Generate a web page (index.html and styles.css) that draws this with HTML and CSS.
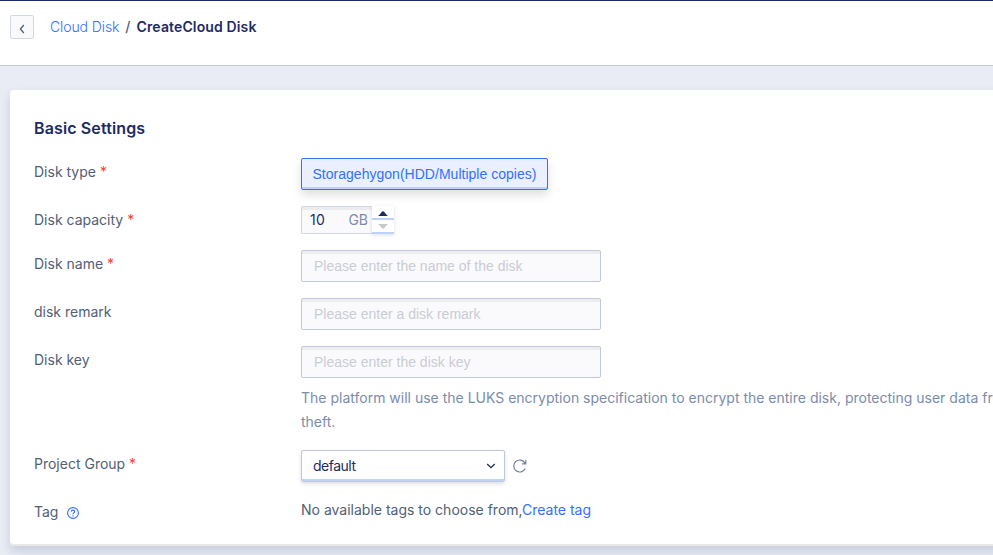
FILE: index.html
```html
<!DOCTYPE html>
<html lang="en">
<head>
<meta charset="utf-8">
<title>Create Cloud Disk</title>
<link rel="stylesheet" href="styles.css">
</head>
<body>
<header class="topbar">
  <button class="back" aria-label="Back"><svg width="6" height="10" viewBox="0 0 6 10"><path d="M4.8 1L1.4 5l3.4 4"/></svg></button>
  <nav class="crumbs"><a href="#">Cloud Disk</a><span class="sep">/</span><strong>CreateCloud Disk</strong></nav>
</header>
<main class="card">
  <h2>Basic Settings</h2>
  <form class="form">
    <div class="row">
      <label>Disk type <i>*</i></label>
      <button type="button" class="choice">Storagehygon(HDD/Multiple copies)</button>
    </div>
    <div class="row capacity">
      <label>Disk capacity <i>*</i></label>
      <div class="stepper">
        <div class="amount"><span>10</span><span class="unit">GB</span></div>
        <div class="arrows">
          <span class="up"><svg width="10" height="5" viewBox="0 0 10 5"><path d="M0 5Q1.5 4 3.5 1.2Q5-.8 6.500 1.200Q8.500 4 10 5z"/></svg></span>
          <span class="down"><svg width="10" height="5" viewBox="0 0 10 5"><path d="M0 0h10Q8.500 1 6.500 3.800Q5 5.800 3.500 3.800Q1.500 1 0 0z"/></svg></span>
        </div>
      </div>
    </div>
    <div class="row">
      <label>Disk name <i>*</i></label>
      <input class="field" placeholder="Please enter the name of the disk">
    </div>
    <div class="row">
      <label>disk remark</label>
      <input class="field" placeholder="Please enter a disk remark">
    </div>
    <div class="row">
      <label>Disk key</label>
      <div>
        <input class="field" placeholder="Please enter the disk key">
        <p class="help">The platform will use the LUKS encryption specification to encrypt the entire disk, protecting user data from<br>theft.</p>
      </div>
    </div>
    <div class="row">
      <label>Project Group <i>*</i></label>
      <div class="group">
        <div class="select"><span>default</span><svg width="10" height="6" viewBox="0 0 10 6"><path d="M1.200 1L5 4.600 8.800 1"/></svg></div>
        <svg class="refresh" width="14" height="14" viewBox="0 0 14 14"><path d="M12 4.100A6 6 0 1 0 12.200 9.500M12.800 1v3.800H9"/></svg>
      </div>
    </div>
    <div class="row">
      <label class="tag">Tag <svg width="12" height="12" viewBox="0 0 12 12"><circle cx="6" cy="6" r="5.400"/><path d="M4.300 4.800C4.300 2.500 7.700 2.600 7.700 4.600C7.700 5.800 6 5.800 6 7.300M6 8.300v1.200"/></svg></label>
      <div class="tags">No available tags to choose from,<a href="#">Create tag</a></div>
    </div>
  </form>
</main>
</body>
</html>
```
FILE: styles.css
```css
* { box-sizing: border-box; }
html { overflow: hidden; }
body {
  margin: 0;
  height: 555px;
  overflow: hidden;
  background: #e9ecf4;
  color: #526075;
  font: 400 14px/24px Inter, "Liberation Sans", sans-serif;
}
a { color: #3370ff; text-decoration: none; }
.topbar {
  display: flex;
  align-items: flex-start;
  gap: 16px;
  height: 66px;
  padding: 14px 10px 0;
  background: #fff;
  border-top: 1px solid #1d2b63;
  border-bottom: 1px solid #c1c7d6;
}
.back {
  display: flex;
  align-items: center;
  justify-content: center;
  width: 24px;
  height: 24px;
  padding: 3px 0 0;
  background: #fafafc;
  border: 1px solid #d3d7ea;
  border-radius: 2px;
}
svg { fill: none; stroke: #1d2b63; stroke-width: 1.3; }
.back svg { stroke: #526075; }
.crumbs a { font-weight: 350; letter-spacing: -.1px; }
.sep { margin: 0 6px; font-weight: 500; }
.crumbs strong { font-weight: 600; letter-spacing: .13px; color: #1d2b63; }
.card {
  width: 1100px;
  height: 456px;
  margin: 24px 0 0 10px;
  padding: 26px 24px 0;
  background: #fff;
  border-radius: 4px;
  box-shadow: inset 0 -2px #e8e8e8, 0 5px 10px rgba(29, 43, 99, .16);
}
h2 { margin: 0 0 18px; font-size: 16px; line-height: 24px; font-weight: 600; letter-spacing: .12px; color: #1d2b63; }
.form { display: flex; flex-direction: column; gap: 16px; }
.row { display: grid; grid-template-columns: 267px 1fr; align-items: start; min-height: 32px; }
.row.capacity { min-height: 28px; }
label { line-height: 28px; }
label i { color: #f04134; font-style: normal; }
.choice {
  width: 247px;
  height: 32px;
  padding: 0 10px;
  font: 14px "Liberation Sans", sans-serif;
  letter-spacing: .02px;
  color: #3370ff;
  white-space: nowrap;
  background: #eaf0ff;
  border: 1px solid #3370ff;
  border-radius: 2px;
  box-shadow: inset 0 -2px #bfd0f5, 0 5px 10px rgba(0, 0, 0, .13);
}
.stepper { display: flex; }
.amount {
  display: flex;
  justify-content: space-between;
  width: 71px;
  height: 28px;
  padding: 1px 4px 0 8px;
  color: #1d2b63;
  background: #fafafc;
  border: 1px solid #d3d7ea;
  border-right: 0;
  border-radius: 2px 0 0 2px;
  box-shadow: inset 0 3px #ececef;
}
.amount span:first-child { letter-spacing: .4px; }
.unit { color: #7b8cab; }
.arrows { width: 22px; box-shadow: 0 1px 4px rgba(0, 0, 0, .13); }
.arrows span { display: flex; align-items: center; justify-content: center; height: 14px; border-bottom: 2px solid #bed1f7; }
.arrows .up { padding-top: 2px; }
.arrows .down { padding-top: 1px; }
.arrows svg { fill: #1d2b63; stroke: none; }
.arrows .down svg { fill: #c9c9c9; }
.field {
  display: block;
  width: 300px;
  height: 32px;
  padding: 0 12px 1px;
  font: 14px "Liberation Sans", sans-serif;
  background: #fafafc;
  border: 1px solid #c1c7dc;
  border-radius: 2px;
  box-shadow: inset 0 3px #ececef;
}
.field::placeholder { color: #caccd4; }
.help { margin: 8px 0 0; color: #7b8cab; white-space: nowrap; }
.group { display: flex; align-items: center; gap: 8px; }
.select {
  display: flex;
  align-items: center;
  justify-content: space-between;
  width: 204px;
  height: 32px;
  padding: 0 8px 0 11px;
  letter-spacing: -.5px;
  color: #1d2b63;
  border: 1px solid #c1c7dc;
  border-radius: 2px;
  box-shadow: inset 0 -2px #bfd2f8, 0 2px 4px rgba(0, 0, 0, .13);
}
.select svg { stroke-width: 1.3; }
.refresh { stroke: #71819b; stroke-width: 1.2; }
.tag { display: flex; align-items: center; gap: 9px; }
.tag svg { stroke: #3370ff; stroke-width: 1.1; margin-top: 2px; }
```
